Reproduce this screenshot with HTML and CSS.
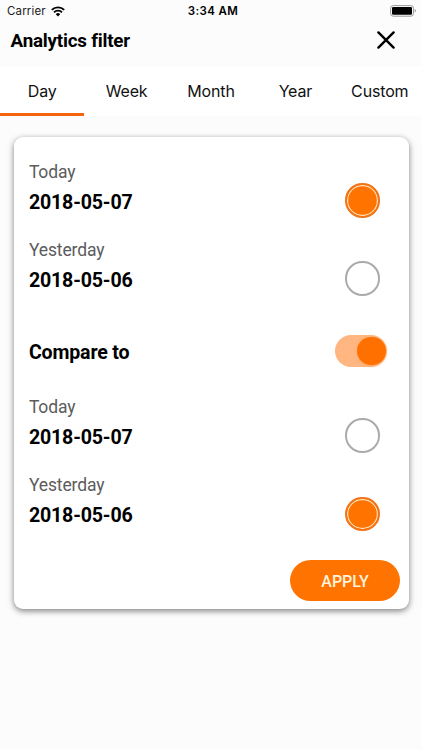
FILE: index.html
```
<!DOCTYPE html>
<html lang="en">
<head>
<meta charset="utf-8">
<meta name="viewport" content="width=device-width, initial-scale=1">
<title>Analytics filter</title>
<link rel="stylesheet" href="styles.css">
</head>
<body>
<div class="status">
  <div class="carrier"><span>Carrier</span>
    <svg class="wifi" width="14" height="11" viewBox="0 0 14 11"><path d="M.8 3.9a8.8 8.8 0 0 1 12.4 0M3 6.3a5.6 5.6 0 0 1 8 0" fill="none" stroke="#000" stroke-width="1.9"/><path d="M7 10.5 4.8 8.2a3.1 3.1 0 0 1 4.4 0z"/></svg>
  </div>
  <time class="clock">3:34 AM</time>
  <svg class="battery" width="27" height="12" viewBox="0 0 27 12"><rect x=".6" y=".6" width="22.8" height="10.6" rx="2.6" fill="none" stroke="#999"/><rect x="2" y="2" width="20" height="7.8" rx="1.2"/><path d="M24.7 4.1c1.7.6 1.7 3 0 3.6z" fill="#999"/></svg>
</div>
<header class="header">
  <h1>Analytics filter</h1>
  <button class="close" aria-label="Close"><svg width="18" height="18" viewBox="0 0 18 18"><path d="M1.4 1.4 16.6 16.6M16.6 1.4 1.4 16.6" stroke="#000" stroke-width="2.4" stroke-linecap="round"/></svg></button>
</header>
<nav class="tabs">
  <a class="tab active">Day</a><a class="tab">Week</a><a class="tab">Month</a><a class="tab">Year</a><a class="tab">Custom</a>
</nav>
<main class="card">
  <div class="row"><div><div class="label">Today</div><div class="date">2018-05-07</div></div><span class="radio on"></span></div>
  <div class="row"><div><div class="label">Yesterday</div><div class="date">2018-05-06</div></div><span class="radio"></span></div>
  <div class="compare"><span class="date">Compare to</span><span class="switch"><span class="knob"></span></span></div>
  <div class="row"><div><div class="label">Today</div><div class="date">2018-05-07</div></div><span class="radio"></span></div>
  <div class="row"><div><div class="label">Yesterday</div><div class="date">2018-05-06</div></div><span class="radio on"></span></div>
  <button class="apply">APPLY</button>
</main>
</body>
</html>
```
FILE: styles.css
```
* { box-sizing: border-box; }
body { margin: 0; height: 750px; overflow: hidden; background: #fcfcfc; color: #000; font-family: Roboto, sans-serif; }
button { border: 0; background: none; padding: 0; }
svg { display: block; }
.status { display: grid; grid-template-columns: 1fr auto 1fr; align-items: center; height: 22px; padding: 0 5px 0 7px; font-family: Inter, sans-serif; font-size: 11.5px; }
.carrier { display: flex; align-items: center; gap: 5.5px; color: #222; letter-spacing: .15px; }
.clock { font-weight: 600; letter-spacing: .4px; margin-left: 2px; }
.battery { justify-self: end; }
.header { display: flex; justify-content: space-between; align-items: center; height: 44px; padding: 0 27px 6px 10.6px; }
h1 { margin: 0; font-size: 18.8px; line-height: 24px; font-weight: 700; letter-spacing: -.22px; }
.close { margin-top: -2px; }
.tabs { display: grid; grid-template-columns: repeat(5, 1fr); height: 50px; background: #fff; }
.tab { display: flex; align-items: center; justify-content: center; border-bottom: 3px solid transparent; padding-top: 3px; font-family: Inter, sans-serif; font-size: 16px; letter-spacing: -.15px; color: #111; }
.active { border-color: #f4640e; }
.card { display: flex; flex-direction: column; width: 395px; height: 472px; margin: 21px 0 0 13.5px; padding: 23.8px 8.5px 8.4px 15.4px; background: #fff; border-radius: 9px; box-shadow: 0 2px 6px rgba(0,0,0,.5); }
.row { display: flex; justify-content: space-between; height: 78.4px; padding-right: 20.3px; }
.label { font-size: 17.5px; line-height: 22px; letter-spacing: -.12px; color: #5c5c5c; margin-bottom: 4.8px; }
.date { font-size: 19.6px; line-height: 29px; font-weight: 700; letter-spacing: -.17px; }
.radio { width: 34.6px; height: 34.6px; margin-top: 22.2px; border: 2px solid #aaa; border-radius: 50%; }
.on { border-color: #f27419; background: #ff7300; box-shadow: inset 0 0 0 1.2px #ffe4bd; }
.compare { display: flex; justify-content: space-between; align-items: center; height: 78.4px; padding: 0 13px 10px 0; }
.compare .date { padding-top: 1.2px; }
.switch { display: flex; justify-content: flex-end; align-items: center; width: 52px; height: 32px; margin-top: -1.4px; padding-right: 1.5px; border-radius: 16px; background: #ffb681; }
.knob { width: 28.5px; height: 28.5px; border-radius: 50%; background: #ff7000; box-shadow: 0 1px 3px rgba(255,155,70,.5); }
.apply { align-self: flex-end; width: 110px; height: 41px; margin-top: auto; border-radius: 21px; background: #ff7300; color: #fff3df; padding-top: 1px; font: 500 16px/41px Roboto, sans-serif; }
```
